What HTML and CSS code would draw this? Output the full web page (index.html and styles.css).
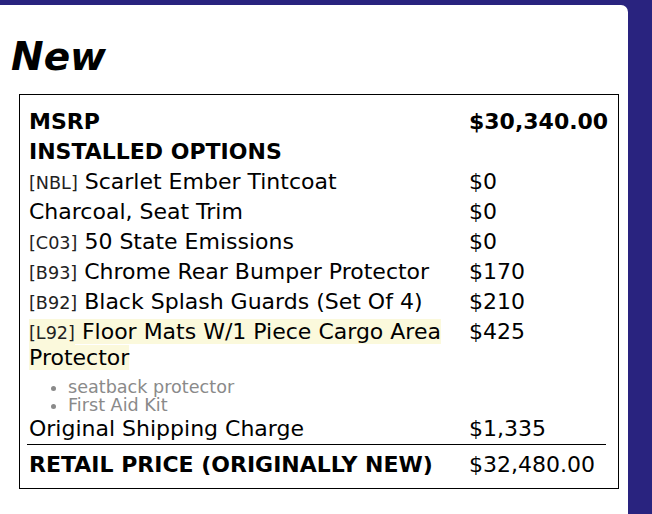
FILE: index.html
```html
<!DOCTYPE html>
<html>
<head>
<meta charset="utf-8">
<link rel="stylesheet" href="styles.css">
</head>
<body>
<div class="panel">
  <h1 class="title">New</h1>
  <div class="box">
    <table class="price-table">
      <colgroup><col class="c-name"><col class="c-price"></colgroup>
      <tr class="row-strong"><td>MSRP</td><td>$30,340.00</td></tr>
      <tr class="row-strong"><td colspan="2">INSTALLED OPTIONS</td></tr>
      <tr><td><span class="code">[NBL]</span> Scarlet Ember Tintcoat</td><td>$0</td></tr>
      <tr><td>Charcoal, Seat Trim</td><td>$0</td></tr>
      <tr><td><span class="code">[C03]</span> 50 State Emissions</td><td>$0</td></tr>
      <tr><td><span class="code">[B93]</span> Chrome Rear Bumper Protector</td><td>$170</td></tr>
      <tr><td><span class="code">[B92]</span> Black Splash Guards (Set Of 4)</td><td>$210</td></tr>
      <tr><td><span class="code hl">[L92]</span><span class="hl"> Floor Mats W/1 Piece Cargo Area</span><span class="hl"> </span><span class="hl">Protector</span></td><td>$425</td></tr>
      <tr class="row-notes"><td colspan="2">
        <ul class="notes">
          <li>seatback protector</li>
          <li>First Aid Kit</li>
        </ul>
      </td></tr>
      <tr><td>Original Shipping Charge</td><td>$1,335</td></tr>
      <tr class="row-total"><td class="label-strong">RETAIL PRICE (ORIGINALLY NEW)</td><td>$32,480.00</td></tr>
    </table>
  </div>
</div>
</body>
</html>
```
FILE: styles.css
```css
html, body {
  margin: 0;
  padding: 0;
  background: #29237f;
}
body {
  font-family: "DejaVu Sans", Verdana, sans-serif;
  color: #000;
}
.panel {
  margin-top: 5px;
  width: 628px;
  min-height: 520px;
  background: #fff;
  border-top-right-radius: 7px;
  overflow: hidden;
}
.title {
  margin: 29px 0 15px 11px;
  font-family: "DejaVu Sans", sans-serif;
  font-size: 39px;
  font-weight: bold;
  font-style: italic;
  line-height: normal;
}
.box {
  box-sizing: border-box;
  margin-left: 19px;
  width: 600px;
  border: 1px solid #000;
  padding: 12px 12px 8px 7px;
}
.price-table {
  border-collapse: collapse;
  width: 579px;
  table-layout: fixed;
  font-size: 22px;
  line-height: 26px;
}
.c-name { width: 440px; }
.price-table td {
  padding: 2px;
  vertical-align: top;
}
.row-strong td { font-weight: bold; }
.code {
  font-size: 17.6px;
  line-height: 1;
  color: #222;
}
.hl {
  background: #fbf9dc;
}
.code.hl {
  padding: 4px 0 5px;
}
.row-notes td {
  padding: 0 2px;
}
.notes {
  margin: 5px 0 0;
  padding-left: 39px;
  font-size: 17.6px;
  line-height: 18px;
  color: #8a8a8a;
}
.row-total td {
  border-top: 1px solid #000;
  padding-top: 7px;
}
.label-strong { font-weight: bold; }
```
